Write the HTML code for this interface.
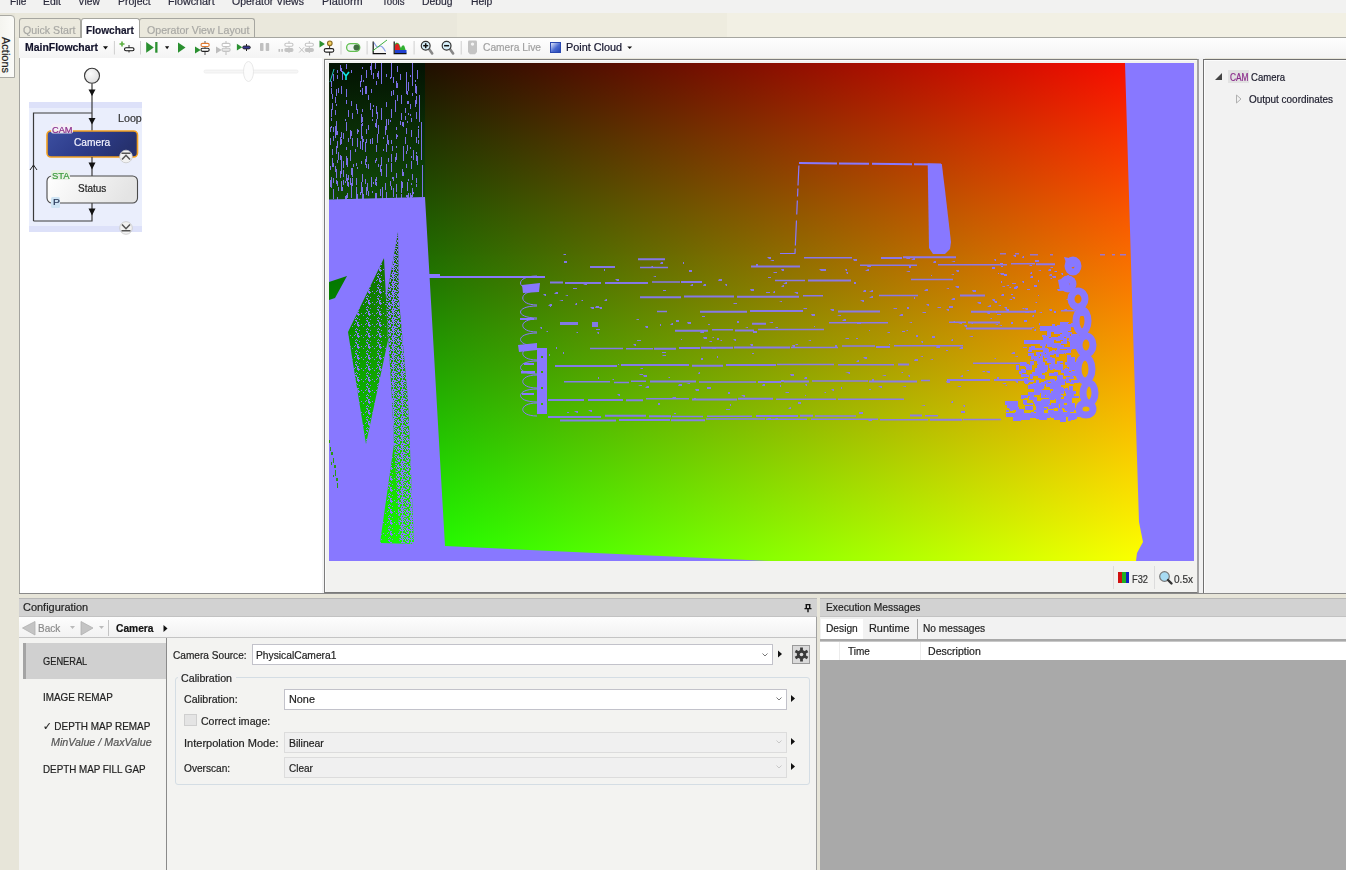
<!DOCTYPE html>
<html><head><meta charset="utf-8">
<style>
*{margin:0;padding:0;box-sizing:border-box}
html,body{width:1346px;height:870px;overflow:hidden;background:#e7e5d9;font-family:"Liberation Sans",sans-serif;font-size:10.5px;color:#1e1e1e}
.a{position:absolute;white-space:nowrap}
.t{position:absolute;white-space:nowrap;line-height:1;transform-origin:0 0;-webkit-text-stroke:0.2px currentColor}
svg{position:absolute;overflow:visible}
</style></head><body>

<!-- MENU -->
<div class="a" style="left:0;top:0;width:1346px;height:13px;background:#f2f2f1"></div>

<div class="a" style="left:15px;top:13px;width:442px;height:24px;background:#eae8dc"></div>
<div class="a" style="left:457px;top:13px;width:270px;height:24px;background:#eeecdf"></div>
<div class="a" style="left:727px;top:13px;width:619px;height:24px;background:#f2f0e4"></div>
<!-- ACTIONS side tab -->
<div class="a" style="left:-2px;top:15px;width:17px;height:63px;background:linear-gradient(to right,#f4f4ef,#fbfbf8);border:1px solid #a9a9a3;border-radius:0 4px 0 0"></div>
<div class="t" style="top:37px;transform:rotate(90deg);transform-origin:0 0;left:11px;font-size:11px;color:#222">Actions</div>

<!-- DOC TABS -->
<div class="a" style="left:19px;top:18px;width:62px;height:19px;background:#ebe9dd;border:1px solid #a6a6a0;border-bottom:none;border-radius:3px 3px 0 0"></div>

<div class="a" style="left:139px;top:18px;width:116px;height:19px;background:#ebe9dd;border:1px solid #a6a6a0;border-bottom:none;border-radius:3px 3px 0 0"></div>

<!-- TOOLBAR -->
<div class="a" style="left:19px;top:37px;width:1327px;height:21px;background:linear-gradient(#fefefe,#f4f4f4);border-top:1px solid #a6a6a0"></div>
<div class="a" style="left:81px;top:18px;width:59px;height:20px;background:#fff;border:1px solid #a6a6a0;border-bottom:none;border-radius:3px 3px 0 0"></div>
<!-- TOOLBAR ICONS -->
<svg id="tb" style="left:0;top:0" width="700" height="60">
<path d="M103,46.2 L108,46.2 L105.5,49.4 Z" fill="#111"/>
<rect x="113.9" y="41" width="1" height="13.5" fill="#cfcfcf"/>
<rect x="140.0" y="41" width="1" height="13.5" fill="#cfcfcf"/>
<rect x="340.5" y="41" width="1" height="13.5" fill="#cfcfcf"/>
<rect x="366.6" y="41" width="1" height="13.5" fill="#cfcfcf"/>
<rect x="413.6" y="41" width="1" height="13.5" fill="#cfcfcf"/>
<rect x="460.7" y="41" width="1" height="13.5" fill="#cfcfcf"/>
<path d="M122,41.5 v5 M119.5,44 h5" stroke="#5cb040" stroke-width="1.6"/>
<path d="M129,45 v7.5" stroke="#333" stroke-width="1"/>
<rect x="124.5" y="47.7" width="9.5" height="3.0" rx="1.5" fill="#fff" stroke="#111" stroke-width="1.1"/>
<path d="M146.2,42 L153.8,47.4 L146.2,52.7 Z" fill="#2a9030"/><rect x="155.2" y="42" width="2.3" height="10.7" fill="#2a9030"/>
<path d="M165,46.3 L169.2,46.3 L167.1,49.2 Z" fill="#111"/>
<path d="M178,42.5 L185.5,47.6 L178,52.7 Z" fill="#2a9030"/>
<path d="M205,41 v14" stroke="#555" stroke-width="1"/>
<rect x="201" y="43.4" width="8.199999999999989" height="3.1000000000000014" rx="1.5500000000000007" fill="#fff" stroke="#e07a30" stroke-width="1.1"/>
<rect x="201" y="48.3" width="8.199999999999989" height="3.1000000000000014" rx="1.5500000000000007" fill="#fff" stroke="#222" stroke-width="1.1"/>
<path d="M195,46.5 L200.7,50 L195,53.6 Z" fill="#2a9030"/>
<path d="M226,41 v14" stroke="#bbb" stroke-width="1"/>
<rect x="222" y="43.4" width="8.199999999999989" height="3.1000000000000014" rx="1.5500000000000007" fill="#fff" stroke="#c4c4c4" stroke-width="1.1"/>
<rect x="222" y="48.3" width="8.199999999999989" height="3.1000000000000014" rx="1.5500000000000007" fill="#e8e8e8" stroke="#c4c4c4" stroke-width="1.1"/>
<path d="M216,46.5 L221.7,50 L216,53.6 Z" fill="#bdbdbd"/>
<path d="M246.5,44 v7" stroke="#222" stroke-width="1"/>
<path d="M236.9,43.8 L242.2,47.2 L236.9,50.5 Z" fill="#2a9030"/>
<rect x="242.7" y="46" width="7.600000000000023" height="2.8999999999999986" rx="1.4499999999999993" fill="#3a3a90" stroke="#222" stroke-width="0.9"/>
<rect x="260" y="43" width="3.5" height="8" rx="0.8" fill="#c0c0c0"/><rect x="265.7" y="43" width="3.5" height="8" rx="0.8" fill="#c0c0c0"/>
<rect x="278.5" y="49" width="1.6" height="2.8" fill="#c0c0c0"/><rect x="281.3" y="49" width="1.6" height="2.8" fill="#c0c0c0"/>
<path d="M289,41 v12" stroke="#c0c0c0" stroke-width="1"/>
<rect x="284.8" y="43.3" width="8.199999999999989" height="2.9000000000000057" rx="1.4500000000000028" fill="#fff" stroke="#c4c4c4" stroke-width="1.1"/>
<rect x="284.8" y="48.6" width="8.199999999999989" height="2.8999999999999986" rx="1.4499999999999993" fill="#c4c4c4" stroke="#c4c4c4" stroke-width="1.1"/>
<path d="M299.2,47.2 l5,5.3 M304.2,47.2 l-5,5.3" stroke="#c4c4c4" stroke-width="1"/>
<path d="M309.3,41 v12" stroke="#c0c0c0" stroke-width="1"/>
<rect x="305.2" y="43.3" width="8.199999999999989" height="2.9000000000000057" rx="1.4500000000000028" fill="#fff" stroke="#c4c4c4" stroke-width="1.1"/>
<rect x="305.2" y="48.6" width="8.199999999999989" height="2.8999999999999986" rx="1.4499999999999993" fill="#c4c4c4" stroke="#c4c4c4" stroke-width="1.1"/>
<path d="M319.5,40.5 L324.9,44 L319.5,47.4 Z" fill="#2a9030"/>
<path d="M329.6,45.5 v10" stroke="#333" stroke-width="1"/>
<circle cx="329.8" cy="43.3" r="2.3" fill="#f4d060" stroke="#8a6a20" stroke-width="1.1"/>
<rect x="324.2" y="48.6" width="9.600000000000023" height="3.5" rx="1.75" fill="#fff" stroke="#222" stroke-width="1.1"/>
<rect x="346.6" y="43.6" width="13.2" height="7.8" rx="3.9" fill="#eef4f2" stroke="#62c050" stroke-width="1.3"/>
<circle cx="356.5" cy="47.5" r="3" fill="#3f6f40"/>
<path d="M373.2,41.4 V53.6 H386" stroke="#111" stroke-width="1.2" fill="none"/>
<path d="M374,42.5 C376,46 377,48 379,46.5 C381,45 383,47 385.5,51.5" stroke="#8aa0e8" stroke-width="1.1" fill="none"/>
<path d="M372.5,51 L387,40" stroke="#40b040" stroke-width="1" fill="none"/>
<path d="M395,53 V44 C396,42 399,42 400,46 L401,48 C402,45 404,44 405,48 L406.5,53 Z" fill="#30b030"/>
<path d="M395,53 V46 C396,42.5 398.5,42.5 399.5,46.5 L400.5,53 Z" fill="#e02020"/>
<path d="M395,50 H406.5 V53.3 H395 Z" fill="#2040d0"/>
<path d="M394.2,41.4 V53.6 H406.5" stroke="#111" stroke-width="1.2" fill="none"/>
<path d="M428.7,48.5 L432.2,53.5" stroke="#888" stroke-width="2.6" stroke-linecap="round"/>
<circle cx="425.7" cy="45.7" r="4.4" fill="#d8f0fa" stroke="#333" stroke-width="1.2"/>
<path d="M423.2,45.7 h5" stroke="#111" stroke-width="1.5"/>
<path d="M425.7,43.2 v5" stroke="#111" stroke-width="1.5"/>
<path d="M449.6,48.5 L453.1,53.5" stroke="#888" stroke-width="2.6" stroke-linecap="round"/>
<circle cx="446.6" cy="45.7" r="4.4" fill="#d8f0fa" stroke="#333" stroke-width="1.2"/>
<path d="M444.1,45.7 h5" stroke="#111" stroke-width="1.5"/>
<path d="M468,42 Q468,40.6 469.4,40.6 H475.6 Q477,40.6 477,42 V52 L475,54.2 H470 L468,52 Z" fill="#c4c4c4"/><circle cx="472.5" cy="44.1" r="1.7" fill="#f4f4f4"/>
<defs><linearGradient id="pcg" x1="0" y1="0" x2="1" y2="1"><stop offset="0" stop-color="#f0f4ff"/><stop offset="0.55" stop-color="#4a6ad0"/><stop offset="1" stop-color="#2040b0"/></linearGradient></defs>
<rect x="550.5" y="42.5" width="10" height="10" fill="url(#pcg)" stroke="#2a48b0" stroke-width="1"/>
<path d="M627.3,46.5 L632.1,46.5 L629.7,49 Z" fill="#111"/>
</svg>

<!-- FLOWCHART PANEL -->
<div class="a" style="left:19px;top:58px;width:304px;height:536px;background:#fff;border-left:1px solid #a4a4a0;border-bottom:1px solid #a0a0a0"></div>
<div class="a" style="left:322px;top:58px;width:2px;height:535px;background:#f4f4f4"></div>
<svg id="fc" style="left:0;top:0" width="330" height="240">
<defs>
<linearGradient id="camg" x1="0" y1="0" x2="1" y2="0.3"><stop offset="0" stop-color="#3c4fa0"/><stop offset="0.5" stop-color="#2e3d8c"/><stop offset="1" stop-color="#26316e"/></linearGradient>
<linearGradient id="stg" x1="0" y1="0" x2="1" y2="0.2"><stop offset="0" stop-color="#ffffff"/><stop offset="1" stop-color="#e4e4e4"/></linearGradient>
<radialGradient id="cg" cx="0.4" cy="0.35" r="0.7"><stop offset="0" stop-color="#fbfbfb"/><stop offset="1" stop-color="#dedede"/></radialGradient>
</defs>
<rect x="204" y="70" width="94" height="3" rx="1.5" fill="#f6f6f6" stroke="#ececec" stroke-width="0.8"/>
<ellipse cx="248.5" cy="71.5" rx="5" ry="10" fill="#fcfcfc" stroke="#e2e2e2" stroke-width="0.8"/>
<rect x="29" y="102" width="113" height="130" fill="#eaeefc"/>
<rect x="29" y="102" width="113" height="6" fill="#dde1f9"/>
<rect x="29" y="226" width="113" height="6" fill="#dde1f9"/>
<circle cx="92" cy="75.8" r="7.5" fill="url(#cg)" stroke="#3a3a3a" stroke-width="1.1"/>
<path d="M92,83.5 V131" stroke="#3a3a3a" stroke-width="1.2"/>
<path d="M88.5,89.5 L95.5,89.5 L92,96 Z" fill="#111"/>
<path d="M33.5,221 V113 H92" stroke="#3a3a3a" stroke-width="1.2" fill="none"/>
<path d="M88.5,118 L95.5,118 L92,124.5 Z" fill="#111"/>
<path d="M30,170 L33.5,165 L37,170" stroke="#222" stroke-width="1" fill="none"/>
<rect x="47" y="131" width="90.5" height="26" rx="4" fill="url(#camg)" stroke="#f2a020" stroke-width="1.6"/>
<rect x="51" y="123.5" width="22" height="10" rx="2" fill="#f4eef6" opacity="0.9"/>
<circle cx="126" cy="156.5" r="6.3" fill="#f2f2f2" stroke="#c8c8c8" stroke-width="0.8"/>
<path d="M121.5,153.3 h9 M122,159.5 L126,155.3 L130,159.5" stroke="#555" stroke-width="1.6" fill="none"/>
<path d="M92,157 V176" stroke="#3a3a3a" stroke-width="1.2"/>
<path d="M88.5,162.5 L95.5,162.5 L92,169.5 Z" fill="#111"/>
<rect x="47" y="176" width="90.5" height="27" rx="5" fill="url(#stg)" stroke="#4a4a4a" stroke-width="1.1"/>
<rect x="51" y="170" width="19" height="10" rx="2" fill="#e8f0e4" opacity="0.95"/>
<rect x="51" y="197" width="9" height="11" rx="1.5" fill="#cfe4f4"/>
<path d="M92,203 V221 H33.5" stroke="#3a3a3a" stroke-width="1.2" fill="none"/>
<path d="M88.5,208.5 L95.5,208.5 L92,215.5 Z" fill="#111"/>
<circle cx="126" cy="228" r="6.3" fill="#f2f2f2" stroke="#c8c8c8" stroke-width="0.8"/>
<path d="M122,224.5 L126,228.7 L130,224.5 M121.5,230.7 h9" stroke="#555" stroke-width="1.6" fill="none"/>
</svg>

<!-- IMAGE PANEL -->
<div class="a" style="left:1197px;top:58px;width:8px;height:536px;background:#f2f2f2"></div>
<div class="a" style="left:324px;top:59px;width:875px;height:535px;background:#f2f2f0;border:1px solid #7c7c7c;border-right:2px solid #a4a4a4;border-bottom:2px solid #7a7a7a;box-shadow:inset 1px 1px 0 #fafafa"></div>
<div id="img" class="a" style="left:329px;top:63px;width:865px;height:498px;overflow:hidden;isolation:isolate">
<div class="a" style="left:0;top:0;width:865px;height:498px;background:linear-gradient(to right,rgb(2,0,0) 0px,rgb(255,0,0) 823px)"></div>
<div class="a" style="left:0;top:0;width:865px;height:498px;background:linear-gradient(to bottom,rgb(0,14,0) 0px,rgb(0,255,0) 495px);mix-blend-mode:screen"></div>
<svg width="865" height="498" viewBox="329 63 865 498" style="left:0;top:0">
<defs>
<linearGradient id="dg" x1="0" y1="0" x2="0" y2="1"><stop offset="0" stop-color="#031203"/><stop offset="0.5" stop-color="#0a2e06"/><stop offset="1" stop-color="#104a08"/></linearGradient>
</defs>
<rect x="329" y="63" width="96" height="136" fill="url(#dg)"/>
<path fill="#8878ff" fill-opacity="0.9" d="M343,164h1v3h-1zM411,156h1v2h-1zM415,80h1v2h-1zM366,164h1v4h-1zM416,137h1v6h-1zM362,109h1v3h-1zM402,182h1v6h-1zM378,125h1v9h-1zM396,81h1v7h-1zM343,170h1v7h-1zM401,190h1v3h-1zM341,132h1v6h-1zM392,177h1v2h-1zM345,181h1v2h-1zM406,164h1v4h-1zM371,177h1v8h-1zM351,101h1v5h-1zM331,109h1v8h-1zM381,157h1v2h-1zM391,163h1v9h-1zM341,165h1v9h-1zM336,104h1v2h-1zM341,156h1v8h-1zM406,151h1v3h-1zM376,182h1v4h-1zM358,130h1v2h-1zM416,155h1v6h-1zM357,129h1v5h-1zM368,191h1v5h-1zM407,121h1v2h-1zM385,183h1v7h-1zM346,156h1v9h-1zM408,113h1v2h-1zM381,108h1v8h-1zM341,181h1v4h-1zM401,95h1v9h-1zM416,152h1v2h-1zM362,117h1v5h-1zM396,146h1v2h-1zM411,195h1v4h-1zM401,197h1v2h-1zM408,101h1v3h-1zM406,195h1v2h-1zM336,126h1v9h-1zM362,192h1v9h-1zM408,193h1v5h-1zM341,163h1v8h-1zM376,81h1v4h-1zM350,156h1v5h-1zM366,187h1v8h-1zM396,194h1v7h-1zM386,144h1v7h-1zM330,180h1v7h-1zM411,195h1v3h-1zM371,89h1v4h-1zM418,129h1v9h-1zM336,146h1v8h-1zM331,81h1v6h-1zM345,119h1v2h-1zM356,104h1v6h-1zM362,141h1v9h-1zM372,191h1v2h-1zM333,127h1v5h-1zM401,194h1v8h-1zM393,189h1v6h-1zM350,150h1v7h-1zM370,66h1v4h-1zM393,77h1v6h-1zM332,103h1v7h-1zM376,145h1v7h-1zM391,109h1v9h-1zM361,134h1v2h-1zM341,86h1v8h-1zM366,139h1v4h-1zM351,189h1v8h-1zM413,192h1v2h-1zM336,121h1v7h-1zM333,178h1v5h-1zM401,188h1v3h-1zM407,197h1v3h-1zM361,130h1v9h-1zM352,113h1v6h-1zM335,97h1v6h-1zM412,188h1v9h-1zM348,182h1v5h-1zM401,184h1v9h-1zM361,131h1v3h-1zM347,193h1v5h-1zM356,187h1v9h-1zM350,178h1v7h-1zM381,159h1v7h-1zM340,137h1v8h-1zM337,75h1v4h-1zM362,174h1v8h-1zM352,168h1v9h-1zM397,95h1v6h-1zM370,139h1v5h-1zM391,140h1v4h-1zM410,104h1v5h-1zM416,178h1v5h-1zM416,86h1v7h-1zM361,124h1v8h-1zM411,161h1v8h-1zM335,132h1v6h-1zM413,155h1v5h-1zM365,86h1v8h-1zM376,177h1v4h-1zM393,188h1v9h-1zM346,177h1v4h-1zM336,180h1v4h-1zM396,127h1v3h-1zM360,81h1v6h-1zM375,63h1v6h-1zM368,125h1v5h-1zM360,141h1v8h-1zM397,83h1v5h-1zM380,189h1v7h-1zM378,164h1v3h-1zM361,114h1v9h-1zM376,119h1v9h-1zM338,187h1v4h-1zM333,163h1v4h-1zM336,169h1v8h-1zM410,147h1v2h-1zM346,147h1v3h-1zM396,134h1v5h-1zM375,160h1v3h-1zM401,113h1v7h-1zM396,184h1v8h-1zM337,181h1v5h-1zM383,149h1v2h-1zM341,139h1v5h-1zM376,109h1v5h-1zM343,180h1v5h-1zM335,126h1v7h-1zM405,116h1v4h-1zM403,122h1v5h-1zM372,138h1v6h-1zM366,129h1v5h-1zM362,123h1v3h-1zM368,164h1v5h-1zM406,72h1v9h-1zM376,158h1v3h-1zM361,75h1v7h-1zM331,177h1v7h-1zM381,118h1v2h-1zM386,146h1v6h-1zM408,82h1v9h-1zM353,164h1v3h-1zM370,104h1v6h-1zM337,141h1v7h-1zM386,169h1v8h-1zM330,166h1v4h-1zM340,171h1v7h-1zM416,96h1v8h-1zM376,106h1v4h-1zM406,80h1v6h-1zM391,186h1v4h-1zM386,195h1v4h-1zM416,112h1v7h-1zM375,179h1v6h-1zM385,126h1v9h-1zM405,108h1v5h-1zM341,184h1v7h-1zM403,173h1v2h-1zM410,193h1v4h-1zM407,91h1v4h-1zM388,119h1v6h-1zM370,103h1v4h-1zM406,128h1v6h-1zM386,192h1v5h-1zM372,109h1v8h-1zM411,130h1v7h-1zM347,178h1v8h-1zM388,158h1v4h-1zM340,155h1v5h-1zM412,75h1v6h-1zM378,71h1v8h-1zM336,169h1v9h-1zM333,74h1v7h-1zM388,140h1v5h-1zM351,168h1v7h-1zM331,184h1v4h-1zM352,178h1v8h-1zM403,152h1v9h-1zM331,126h1v2h-1zM346,123h1v5h-1zM410,195h1v4h-1zM376,193h1v9h-1zM401,182h1v5h-1zM336,89h1v7h-1zM412,174h1v6h-1zM411,118h1v4h-1zM392,146h1v5h-1zM411,183h1v2h-1zM343,163h1v4h-1zM346,100h1v4h-1zM351,70h1v3h-1zM386,74h1v3h-1zM361,161h1v3h-1zM342,71h1v9h-1zM362,88h1v7h-1zM332,149h1v6h-1zM387,135h1v9h-1zM338,88h1v5h-1zM333,136h1v5h-1zM406,76h1v9h-1zM357,194h1v5h-1zM346,122h1v9h-1zM391,154h1v8h-1zM418,140h1v4h-1zM403,146h1v7h-1zM368,95h1v5h-1zM351,131h1v5h-1zM386,146h1v5h-1zM346,89h1v8h-1zM346,174h1v6h-1zM390,181h1v5h-1zM352,138h1v8h-1zM396,173h1v5h-1zM371,179h1v8h-1zM395,103h1v9h-1zM357,167h1v2h-1zM416,90h1v4h-1zM408,179h1v2h-1zM395,157h1v5h-1zM348,110h1v7h-1zM390,77h1v2h-1zM397,66h1v6h-1zM393,90h1v5h-1zM356,163h1v3h-1zM395,100h1v6h-1zM367,183h1v8h-1zM377,134h1v9h-1zM342,187h1v4h-1zM381,77h1v7h-1zM348,138h1v4h-1zM402,122h1v4h-1zM363,139h1v3h-1zM348,175h1v3h-1zM350,130h1v9h-1zM418,126h1v2h-1zM407,182h1v9h-1zM341,158h1v7h-1zM337,70h1v3h-1zM351,193h1v5h-1zM381,169h1v7h-1zM413,150h1v5h-1zM397,135h1v2h-1zM405,137h1v7h-1zM360,192h1v3h-1zM376,147h1v3h-1zM335,166h1v6h-1zM360,90h1v2h-1zM341,159h1v2h-1zM356,180h1v4h-1zM381,110h1v8h-1zM345,196h1v8h-1zM393,177h1v4h-1zM416,184h1v3h-1zM351,183h1v8h-1zM346,64h1v5h-1zM332,94h1v5h-1zM356,178h1v7h-1zM415,84h1v9h-1zM340,65h1v6h-1zM382,187h1v9h-1zM351,183h1v7h-1zM402,169h1v7h-1zM383,137h1v2h-1zM365,142h1v8h-1zM365,159h1v6h-1zM337,131h1v4h-1zM415,100h1v7h-1zM361,187h1v6h-1zM373,182h1v2h-1zM343,161h1v7h-1zM412,79h1v7h-1zM361,185h1v5h-1zM377,112h1v7h-1zM407,101h1v3h-1zM341,158h1v7h-1zM346,195h1v5h-1zM362,187h1v6h-1zM403,172h1v4h-1zM355,149h1v3h-1zM417,70h1v9h-1zM366,86h1v8h-1zM357,109h1v5h-1zM372,119h1v2h-1zM410,75h1v2h-1zM331,88h1v6h-1zM347,158h1v9h-1zM366,160h1v2h-1zM361,182h1v4h-1zM386,119h1v9h-1zM365,149h1v3h-1zM366,156h1v4h-1zM350,178h1v4h-1zM366,131h1v2h-1zM357,138h1v9h-1zM406,90h1v4h-1zM363,194h1v9h-1zM362,136h1v8h-1zM375,123h1v4h-1zM330,138h1v7h-1zM333,193h1v6h-1zM335,110h1v5h-1zM356,196h1v3h-1zM356,189h1v4h-1zM410,114h1v2h-1zM382,195h1v9h-1zM406,86h1v6h-1zM386,126h1v4h-1zM332,158h1v9h-1zM386,195h1v7h-1zM337,160h1v3h-1zM333,189h1v4h-1zM341,68h1v4h-1zM373,105h1v2h-1zM362,67h1v2h-1zM401,181h1v7h-1zM400,74h1v6h-1zM391,91h1v5h-1zM400,121h1v4h-1zM337,197h1v7h-1zM380,165h1v7h-1zM396,153h1v7h-1zM363,80h1v2h-1zM390,120h1v2h-1zM373,73h1v6h-1zM330,127h1v5h-1zM377,73h1v4h-1zM412,93h1v3h-1zM350,182h1v3h-1zM375,193h1v6h-1zM343,133h1v6h-1zM365,179h1v5h-1zM417,156h1v9h-1zM366,70h1v8h-1zM386,164h1v5h-1zM407,145h1v6h-1zM331,118h1v3h-1zM338,152h1v8h-1zM348,175h1v5h-1zM386,102h1v5h-1zM407,195h1v4h-1zM371,63h1v12h-1zM381,63h1v14h-1zM391,63h1v15h-1zM412,63h1v17h-1zM419,95h1v27h-1zM421,122h1v38h-1zM422,165h1v32h-1z"/>
<path d="M343,72 L346,76 L349,72 M346,76 V80" stroke="#10e8e8" stroke-width="1.6" fill="none"/>
<path d="M330,82 L334,69" stroke="#20c0c0" stroke-width="1" fill="none"/>
<path fill-rule="evenodd" fill="#8878ff" d="M329,199.5 L425,197 L445,546 L770,561 L329,561 Z M384,258 L388,340 L366,444 L348,332 Z M398,232 L386,300 L392,400 L394,444 L380,543 L414,544 L408,400 L399,300 Z M329,282 L347,276 L335,298 L329,300 Z"/>
<pattern id="ptile" width="9" height="9" patternUnits="userSpaceOnUse"><path fill="#8878ff" d="M0,0h1v1h-1zM3,0h1v1h-1zM6,0h1v1h-1zM1,1h1v1h-1zM2,1h1v1h-1zM3,1h1v1h-1zM6,1h1v1h-1zM2,2h1v1h-1zM3,2h1v1h-1zM5,2h1v1h-1zM6,2h1v1h-1zM7,2h1v1h-1zM8,2h1v1h-1zM0,3h1v1h-1zM1,3h1v1h-1zM5,3h1v1h-1zM7,3h1v1h-1zM8,3h1v1h-1zM4,4h1v1h-1zM5,4h1v1h-1zM6,4h1v1h-1zM7,4h1v1h-1zM0,5h1v1h-1zM2,5h1v1h-1zM5,5h1v1h-1zM6,5h1v1h-1zM8,5h1v1h-1zM1,6h1v1h-1zM2,6h1v1h-1zM5,6h1v1h-1zM6,6h1v1h-1zM7,6h1v1h-1zM1,7h1v1h-1zM2,7h1v1h-1zM3,7h1v1h-1zM4,7h1v1h-1zM6,7h1v1h-1zM8,7h1v1h-1zM0,8h1v1h-1zM2,8h1v1h-1zM4,8h1v1h-1zM5,8h1v1h-1zM6,8h1v1h-1zM7,8h1v1h-1z"/></pattern>
<path fill="url(#ptile)" d="M398,232 L386,300 L392,400 L394,444 L400,543 L414,544 L408,400 L399,300 Z"/>
<pattern id="ptile2" width="11" height="11" patternUnits="userSpaceOnUse"><path fill="#8878ff" d="M7,0h1v1h-1zM3,1h1v1h-1zM4,1h1v1h-1zM4,2h1v1h-1zM5,3h1v1h-1zM6,3h1v1h-1zM3,4h1v1h-1zM5,4h1v1h-1zM2,5h1v1h-1zM5,5h1v1h-1zM6,5h1v1h-1zM9,5h1v1h-1zM5,6h1v1h-1zM6,6h1v1h-1zM7,6h1v1h-1zM0,7h1v1h-1zM6,7h1v1h-1zM4,9h1v1h-1zM3,10h1v1h-1zM5,10h1v1h-1z"/></pattern>
<path fill="url(#ptile2)" d="M384,258 L388,340 L366,444 L348,332 Z M394,444 L400,543 L380,543 Z"/>
<path fill="#2a9a10" d="M329,440h1v3h-1z M330,447h1v4h-1z M331,452h2v3h-2z M333,458h1v5h-1z M334,465h2v3h-2z M335,470h1v6h-1z M336,478h2v3h-2z M337,483h1v5h-1z M331,462h1v3h-1z M333,475h1v2h-1z"/>
<path fill="#8878ff" d="M1125,63 L1194,63 L1194,561 L1136,561 L1137,553 L1143,542 L1139,522 L1133,330 Z"/>
<path fill="none" stroke="#8878ff" stroke-width="1.2" stroke-dasharray="20 3 25 6 14 4 8 3" d="M780,253.5 L795,253.5 L799,163.5"/>
<path fill="none" stroke="#8878ff" stroke-width="2" stroke-dasharray="38 2 30 3 40 2 30 1" d="M799,163 L941,164.5"/>
<path fill="#8878ff" d="M927.7,163.5 L941.8,164 L945,190 L951,242 L950,249 L945,254 L933,254 L929,248 Z"/>
<path fill="#8878ff" fill-opacity="0.9" d="M638,258.3h27v2h-27zM804,257.1h48v1.5h-48zM881,257.0h21v2h-21zM903,256.3h53v2h-53zM640,266.8h28v1.5h-28zM751,265.5h49v2h-49zM860,264.6h57v1.5h-57zM938,264.0h69v1.5h-69zM1011,263.0h24v1.5h-24zM1036,263.3h19v2h-19zM550,281.5h13v2h-13zM565,281.9h36v2h-36zM605,282.1h43v2h-43zM652,281.2h28v1.5h-28zM681,281.0h21v2h-21zM775,279.8h30v1.5h-30zM808,279.5h43v2h-43zM911,278.7h42v1.5h-42zM1069,278.5h6v2h-6zM640,296.2h41v2h-41zM684,295.5h50v2h-50zM737,295.8h62v2h-62zM803,295.0h20v1.5h-20zM879,294.7h39v1.5h-39zM960,294.4h25v2h-25zM657,310.8h10v1.5h-10zM700,310.7h47v2h-47zM750,310.1h53v2h-53zM838,310.5h42v2h-42zM971,310.7h65v2h-65zM1061,310.0h14v1.5h-14zM752,322.7h14v2h-14zM829,321.9h59v1.5h-59zM949,321.5h17v1.5h-17zM968,321.4h32v2h-32zM675,329.8h33v2h-33zM712,329.1h21v1.5h-21zM735,329.4h19v2h-19zM758,328.8h66v1.5h-66zM966,327.6h66v2h-66zM590,347.7h33v1.5h-33zM626,347.9h27v1.5h-27zM654,347.7h22v2h-22zM679,347.0h21v2h-21zM701,346.8h32v2h-32zM734,346.6h56v2h-56zM791,346.7h47v1.5h-47zM842,345.3h33v1.5h-33zM876,346.0h14v2h-14zM894,344.9h69v1.5h-69zM555,365.0h62v2h-62zM621,364.1h68v2h-68zM692,364.7h31v2h-31zM726,364.0h50v2h-50zM777,363.7h57v1.5h-57zM838,363.9h56v1.5h-56zM898,363.5h11v2h-11zM973,362.6h54v1.5h-54zM564,380.9h46v1.5h-46zM614,381.7h15v1.5h-15zM631,380.6h15v1.5h-15zM650,380.5h46v2h-46zM699,381.3h57v1.5h-57zM758,381.0h23v2h-23zM784,380.4h25v2h-25zM812,380.3h56v1.5h-56zM869,380.5h48v2h-48zM921,379.7h9v1.5h-9zM947,379.1h43v2h-43zM994,378.9h30v2h-30zM548,399.0h36v2h-36zM588,398.9h35v2h-35zM626,399.2h17v2h-17zM646,398.1h43v1.5h-43zM692,398.5h45v2h-45zM738,397.8h35v2h-35zM776,398.6h60v1.5h-60zM838,398.4h66v1.5h-66zM548,416.0h53v2h-53zM605,414.8h41v2h-41zM649,415.2h22v2h-22zM672,415.7h31v1.5h-31zM707,415.6h45v1.5h-45zM756,414.9h42v2h-42zM800,414.8h13v2h-13zM815,415.2h41v1.5h-41zM910,414.5h12v2h-12zM925,414.9h13v1.5h-13zM560,419.5h56v2h-56zM619,418.9h51v2h-51zM671,419.3h34v2h-34zM706,418.2h59v1.5h-59zM766,418.6h41v1.5h-41zM811,418.5h67v1.5h-67zM880,418.9h48v1.5h-48zM930,418.8h32v2h-32zM963,418.7h38v1.5h-38zM590,266h25v2h-25z M560,322h18v3h-18z M592,322h6v5h-6zM577,332h1v1h-2zM907,307h2v2h-2zM992,299h3v2h-2zM859,412h4v2h-4zM952,339h1v2h-2zM949,264h2v1h-4zM1068,322h1v1h-1zM1023,347h4v1h-4zM701,358h2v2h-2zM805,384h2v2h-1zM694,398h2v1h-2zM692,284h1v2h-3zM639,374h4v1h-3zM559,300h4v1h-1zM990,305h1v2h-4zM701,331h3v2h-4zM617,394h3v2h-1zM908,271h2v1h-4zM1012,283h4v1h-4zM1026,312h3v1h-4zM550,304h2v2h-4zM845,338h4v1h-3zM733,303h4v1h-3zM857,322h4v2h-4zM931,275h1v1h-1zM674,413h2v1h-2zM951,261h4v1h-1zM772,260h2v1h-4zM956,270h3v2h-2zM750,289h4v2h-3zM962,411h1v2h-3zM790,407h1v2h-3zM733,339h3v2h-1zM926,304h3v2h-1zM702,316h3v1h-3zM1052,383h2v1h-2zM567,412h2v1h-2zM790,374h4v2h-3zM633,344h3v2h-1zM1003,286h2v1h-3zM712,337h2v1h-1zM835,345h2v2h-2zM730,404h1v2h-1zM953,298h2v2h-4zM556,292h2v2h-4zM573,288h4v1h-4zM717,338h2v2h-2zM880,265h1v1h-4zM1049,405h1v2h-3zM961,411h4v2h-4zM1014,356h4v1h-1zM878,386h4v2h-1zM868,265h3v2h-4zM869,330h1v1h-1zM997,314h4v1h-4zM647,386h2v2h-4zM781,269h3v2h-2zM767,418h4v1h-1zM640,385h2v1h-4zM540,327h2v2h-1zM872,296h1v2h-4zM946,288h3v1h-1zM853,259h4v2h-3zM872,379h2v2h-2zM747,327h1v1h-3zM902,372h1v1h-2zM781,301h1v1h-3zM860,322h4v1h-3zM995,358h1v1h-2zM854,282h2v2h-2zM781,380h3v2h-3zM658,403h2v2h-2zM771,322h2v1h-4zM618,364h1v1h-1zM831,389h3v2h-1zM708,324h2v1h-2zM825,392h1v1h-2zM574,411h4v2h-1zM1051,267h2v1h-3zM868,420h4v1h-3zM1057,414h2v1h-1zM986,312h4v2h-2zM805,377h2v2h-3zM576,303h1v2h-2zM872,290h1v2h-4zM1055,365h3v1h-1zM657,297h2v1h-1zM858,360h1v2h-3zM1050,274h2v2h-3zM794,292h4v2h-1zM863,357h4v2h-2zM583,284h4v1h-2zM1006,385h1v1h-2zM959,386h2v1h-4zM845,372h4v1h-1zM775,327h3v1h-2zM968,370h1v1h-3zM856,338h2v1h-2zM952,401h1v2h-2zM1013,352h2v2h-4zM590,307h4v2h-2zM728,392h2v2h-2zM949,306h4v2h-4zM997,377h2v2h-2zM932,359h1v1h-3zM911,322h1v1h-3zM1064,352h2v2h-1zM909,266h2v2h-2zM786,282h1v2h-4zM1000,273h4v2h-3zM596,329h4v1h-4zM581,300h2v1h-1zM753,331h4v2h-4zM679,384h3v2h-4zM926,289h2v2h-4zM955,286h4v2h-2zM645,326h3v2h-2zM683,262h1v2h-1zM845,269h2v2h-1zM923,312h3v1h-4zM662,352h4v1h-4zM932,336h3v2h-3zM766,292h4v1h-4zM710,341h2v1h-3zM972,290h4v2h-3zM563,352h1v2h-1zM954,321h1v2h-4zM847,372h3v2h-1zM564,261h3v2h-3zM844,319h2v2h-4zM889,344h1v1h-1zM588,410h4v2h-1zM822,269h4v2h-4zM934,261h2v2h-3zM1046,344h4v1h-2zM737,321h2v2h-2zM780,385h1v2h-1zM785,392h4v1h-3zM810,340h1v1h-3zM752,353h2v1h-2zM703,337h4v2h-3zM964,325h3v2h-2zM795,344h3v1h-2zM604,269h1v2h-1zM1002,383h4v1h-2zM962,375h1v2h-3zM946,381h4v2h-3zM916,335h2v2h-2zM672,397h4v1h-3zM704,284h2v2h-3zM776,418h2v1h-4zM676,320h3v2h-3zM946,350h2v1h-2zM661,262h2v2h-3zM663,355h3v1h-4zM715,347h1v2h-4zM830,309h4v2h-2zM938,307h3v1h-4zM719,279h3v2h-4zM663,290h3v1h-3zM687,322h4v2h-3zM773,272h4v1h-3zM805,395h1v1h-1zM547,331h1v1h-2zM884,375h2v1h-4zM1035,260h4v2h-4zM599,307h3v2h-2zM837,315h4v1h-2zM567,295h1v1h-3zM907,258h3v1h-4zM550,305h1v2h-1zM811,314h4v2h-3zM643,375h4v2h-3zM564,254h2v1h-3zM937,346h3v2h-4zM902,331h3v1h-3zM636,319h3v1h-2zM756,264h2v2h-2zM721,340h1v1h-2zM921,341h2v2h-1zM549,354h1v2h-1zM869,389h2v1h-2zM868,269h1v2h-4zM1024,308h4v2h-2zM819,269h4v2h-2zM905,386h1v1h-4zM596,306h3v2h-4zM1056,397h1v1h-4zM986,371h4v2h-2zM924,405h1v1h-4zM997,324h1v1h-3zM695,389h4v2h-3zM860,300h4v2h-1zM669,377h1v1h-2zM685,281h1v2h-3zM606,299h1v2h-3zM1070,341h4v1h-1zM977,302h4v2h-2zM615,279h4v2h-2zM613,379h1v1h-2zM914,297h1v2h-1zM894,308h3v1h-4zM726,409h4v1h-4zM1040,270h1v1h-3zM741,395h4v2h-1zM887,332h3v1h-2zM725,284h2v2h-1zM672,323h1v2h-3zM906,330h2v1h-1zM750,344h3v2h-2zM689,270h3v2h-3zM958,323h4v1h-1zM637,340h4v1h-4zM660,324h1v2h-1zM1005,309h4v2h-2zM963,405h2v2h-1zM915,359h3v2h-4zM814,326h1v1h-1zM961,347h2v2h-4zM970,323h3v1h-1zM641,368h2v1h-3zM556,347h1v2h-1zM699,372h1v2h-2zM1015,381h3v2h-1zM767,257h4v2h-2zM652,266h1v2h-4zM763,384h2v2h-3zM686,383h4v1h-1zM543,294h3v2h-1zM983,371h2v1h-3zM914,258h1v2h-4zM653,276h3v1h-1zM783,285h1v2h-3zM901,314h2v2h-4zM595,307h4v1h-1zM1010,287h1v1h-2zM717,356h1v2h-1zM774,291h1v2h-2zM841,387h1v2h-1zM1045,328h1v2h-4zM846,272h2v2h-1zM969,336h4v1h-2zM1052,276h4v2h-3zM804,308h3v1h-4zM1028,350h3v2h-3zM1001,281h1v2h-1zM707,387h4v2h-4zM768,277h3v1h-3zM908,375h2v2h-1zM922,356h1v1h-3zM792,345h3v2h-2zM597,332h2v2h-1zM1068,340h1v1h-2zM798,402h3v2h-3zM951,274h3v1h-1zM946,309h3v2h-1zM864,290h2v2h-3zM598,377h1v2h-1zM681,339h1v1h-1zM1030,359h3v1h-2z"/>
<rect x="425" y="274" width="15" height="4" fill="#8878ff"/><rect x="440" y="276" width="105" height="2" fill="#8878ff"/>
<path fill-rule="evenodd" fill="#8878ff" d="M537,348 h10 v66 h-10 z M541,356 h2v2h-2z M541,371 h2v2h-2z M541,387 h2v2h-2z M541,403 h2v2h-2z"/>
<path fill="none" stroke="#8878ff" stroke-width="1" d="M537,276 C515,276 515,290 537,290 M537,291 C518,291 518,305 537,305 M537,306 C515,306 515,318 537,318 M537,319 C518,319 518,332 537,332 M537,333 C515,333 515,346 537,346 M537,347 C518,347 518,360 537,360 M537,361 C515,361 515,374 537,374 M537,375 C518,375 518,388 537,388 M537,389 C515,389 515,402 537,402 M537,403 C518,403 518,416 537,416"/>
<path fill="#8878ff" d="M522,285 L540,283 L539,292 L523,293 Z M518,345 L537,343 L537,350 L519,352 Z M520,318h14v2h-14z M521,371h14v2.5h-14z M522,393h12v2h-12z M524,363h10v2h-10z"/>
<ellipse cx="1073" cy="266" rx="5" ry="6" fill="none" stroke="#8878ff" stroke-width="7"/>
<ellipse cx="1068" cy="284" rx="5" ry="5" fill="none" stroke="#8878ff" stroke-width="7"/>
<ellipse cx="1078" cy="299" rx="7" ry="8" fill="none" stroke="#8878ff" stroke-width="7"/>
<ellipse cx="1082" cy="321" rx="6" ry="11" fill="none" stroke="#8878ff" stroke-width="7"/>
<ellipse cx="1086" cy="345" rx="7" ry="9" fill="none" stroke="#8878ff" stroke-width="7"/>
<ellipse cx="1085" cy="369" rx="7" ry="12" fill="none" stroke="#8878ff" stroke-width="7"/>
<ellipse cx="1089" cy="393" rx="6" ry="10" fill="none" stroke="#8878ff" stroke-width="7"/>
<ellipse cx="1086" cy="409" rx="7" ry="6" fill="none" stroke="#8878ff" stroke-width="7"/>
<path fill="#8878ff" d="M1064,257 L1074,259 L1078,266 L1068,268 Z M1058,280 L1068,277 L1070,290 L1060,291 Z M1076,306 h8 v10 h-8z M1080,330 h8 v6 h-8z M1082,352 h8 v6 h-8z M1083,378 h8 v5 h-8z"/>
<path fill="#8878ff" d="M1032,372h4v4h-4zM1050,351h8v3h-8zM1048,338h6v3h-6zM1067,365h4v2h-4zM1037,352h3v5h-3zM1013,416h8v5h-8zM1041,400h8v3h-8zM1068,364h8v3h-8zM1041,401h4v4h-4zM1060,417h6v5h-6zM1067,357h8v5h-8zM1042,345h3v5h-3zM1064,369h8v2h-8zM1021,395h3v4h-3zM1052,379h3v3h-3zM1051,411h6v2h-6zM1007,404h8v4h-8zM1055,366h8v4h-8zM1050,364h6v5h-6zM1053,386h4v3h-4zM1039,373h3v5h-3zM1043,408h4v2h-4zM1052,350h3v2h-3zM1036,412h6v4h-6zM1057,361h3v3h-3zM1037,365h3v3h-3zM1060,334h3v5h-3zM1056,339h4v2h-4zM1058,392h6v2h-6zM1057,364h6v4h-6zM1058,388h6v5h-6zM1048,411h6v3h-6zM1045,359h4v2h-4zM1057,328h3v3h-3zM1014,405h4v4h-4zM1030,384h3v4h-3zM1066,377h8v2h-8zM1033,397h4v5h-4zM1061,341h6v3h-6zM1067,327h4v4h-4zM1038,411h6v2h-6zM1050,393h4v5h-4zM1018,409h6v5h-6zM1050,367h3v3h-3zM1070,345h6v3h-6zM1064,396h6v5h-6zM1040,343h6v3h-6zM1042,390h8v5h-8zM1025,406h8v4h-8zM1066,381h4v2h-4zM1054,372h4v3h-4zM1030,394h4v5h-4zM1060,389h6v2h-6zM1056,343h3v5h-3zM1027,415h8v3h-8zM1057,391h3v2h-3zM1070,391h6v3h-6zM1066,332h6v2h-6zM1051,363h4v2h-4zM1049,373h8v3h-8zM1034,348h8v2h-8zM1008,401h8v4h-8zM1028,380h6v2h-6zM1034,388h8v5h-8zM1067,397h3v3h-3zM1025,403h8v2h-8zM1049,395h6v5h-6zM1037,352h8v2h-8zM1034,392h6v3h-6zM1052,394h6v5h-6zM1064,374h4v2h-4zM1045,396h6v2h-6zM1043,404h6v3h-6zM1058,336h6v4h-6zM1056,380h8v2h-8zM1028,385h6v4h-6zM1038,373h3v5h-3zM1056,395h6v2h-6zM1069,337h4v5h-4zM1068,350h3v2h-3zM1036,415h6v4h-6zM1046,352h3v2h-3zM1046,415h4v3h-4zM1058,331h4v2h-4zM1041,362h4v5h-4zM1032,413h3v2h-3zM1065,388h3v5h-3zM1044,356h6v2h-6zM1052,346h4v2h-4zM1051,414h8v4h-8zM1011,407h8v3h-8zM1036,371h6v5h-6zM1030,361h4v4h-4zM1043,382h4v2h-4zM1037,359h6v5h-6zM1022,415h8v5h-8zM1015,412h8v2h-8zM1033,398h3v4h-3zM1060,410h3v4h-3zM1019,371h3v3h-3zM1061,379h8v2h-8zM1038,364h4v3h-4zM1056,350h8v4h-8zM1033,383h8v4h-8zM1067,355h4v3h-4zM1043,338h8v3h-8zM1048,338h4v2h-4zM1064,398h8v5h-8zM1071,323h3v4h-3zM1031,356h8v3h-8zM1016,365h3v5h-3zM1066,396h4v4h-4zM1071,396h8v2h-8zM1067,362h6v3h-6zM1071,344h4v4h-4zM1050,379h3v2h-3zM1046,352h8v2h-8zM1057,396h3v3h-3zM1053,383h8v4h-8zM1034,357h3v4h-3zM1071,371h4v4h-4zM1040,348h8v2h-8zM1067,406h3v5h-3zM1007,402h4v4h-4zM1068,328h3v3h-3zM1062,331h6v5h-6zM1036,406h8v5h-8zM1068,408h8v2h-8zM1047,329h8v3h-8zM1068,417h3v4h-3zM1069,365h6v5h-6zM1071,340h6v2h-6zM1018,414h3v2h-3zM1051,381h8v2h-8zM1024,378h4v5h-4zM1063,338h4v3h-4zM1049,364h3v4h-3zM1069,386h4v5h-4zM1015,401h3v4h-3zM1065,368h3v2h-3zM1048,410h6v3h-6zM1037,355h3v2h-3zM1038,375h3v3h-3zM1036,358h4v2h-4zM1057,399h8v4h-8zM1069,415h6v5h-6zM1031,393h4v2h-4zM1009,405h6v2h-6zM1062,399h4v4h-4zM1062,412h8v4h-8zM1056,384h4v5h-4zM1042,335h4v2h-4zM1020,362h6v4h-6zM1008,413h3v2h-3zM1016,413h3v2h-3zM1041,393h4v5h-4zM1015,414h3v3h-3zM1070,341h8v4h-8zM1043,340h8v2h-8zM1008,415h6v2h-6zM1070,347h6v2h-6zM1039,417h8v3h-8zM1036,390h4v3h-4zM1065,362h6v3h-6zM1012,401h3v4h-3zM1035,413h3v2h-3zM1041,382h4v4h-4zM1070,374h3v3h-3zM1070,407h4v5h-4zM1059,380h6v5h-6zM1046,383h8v4h-8zM1044,381h4v2h-4zM1060,361h3v2h-3zM1066,333h4v5h-4zM1031,413h3v2h-3zM1045,365h3v5h-3zM1056,352h3v5h-3zM1052,393h6v5h-6zM1048,357h4v4h-4zM1026,365h6v5h-6zM1036,380h3v5h-3zM1031,346h4v4h-4zM1034,410h8v2h-8zM1066,373h4v3h-4zM1051,394h6v4h-6zM1053,389h6v4h-6zM1022,370h4v3h-4zM1054,414h4v4h-4zM1060,403h4v5h-4zM1037,408h8v2h-8zM1035,403h8v3h-8zM1046,380h6v2h-6zM1064,333h3v4h-3zM1050,364h8v4h-8zM1064,372h8v3h-8zM1070,409h3v3h-3zM1067,408h4v4h-4zM1061,370h8v3h-8zM1057,343h4v5h-4zM1066,324h6v3h-6zM1050,326h3v2h-3zM1051,383h6v2h-6zM1055,411h4v2h-4zM1051,403h8v5h-8zM1026,381h3v2h-3zM1043,349h6v3h-6zM1070,405h4v3h-4zM1067,390h6v4h-6zM1018,409h3v5h-3zM1071,338h4v5h-4zM1051,329h8v2h-8zM1042,370h3v3h-3zM1042,375h3v4h-3zM1024,403h6v2h-6zM1047,332h4v5h-4zM1039,386h3v2h-3zM1070,382h4v2h-4zM1042,399h8v5h-8zM1025,380h3v4h-3zM1057,375h6v5h-6zM1013,417h8v4h-8zM1009,406h8v3h-8zM1005,401h3v4h-3zM1041,367h3v4h-3zM1028,353h6v3h-6zM1021,375h8v2h-8zM1062,327h3v3h-3zM1047,352h3v4h-3zM1041,377h4v2h-4zM1010,406h3v5h-3zM1071,334h8v4h-8zM1036,371h3v5h-3zM1060,322h8v4h-8zM1052,394h8v5h-8zM1059,347h8v2h-8zM1069,415h8v4h-8zM1041,354h8v2h-8zM1006,410h3v2h-3zM1047,343h8v4h-8zM1064,406h3v2h-3zM1051,391h8v2h-8zM1066,392h8v5h-8zM1071,380h8v3h-8zM1050,353h4v2h-4zM1025,364h4v3h-4zM1057,325h3v5h-3zM1071,372h6v4h-6zM1040,356h3v4h-3zM1030,374h3v5h-3zM1070,336h8v5h-8zM1057,393h4v3h-4zM1060,387h3v5h-3zM1054,416h6v4h-6zM1046,394h8v3h-8zM1064,405h4v4h-4zM1028,392h6v4h-6zM1055,343h4v4h-4zM1051,360h3v2h-3zM1057,395h6v2h-6zM1015,415h8v5h-8zM1010,406h4v4h-4zM1039,348h4v2h-4zM1023,400h4v4h-4zM1049,383h4v3h-4zM1011,406h6v3h-6zM1071,357h4v5h-4zM1067,401h4v5h-4zM1051,337h8v3h-8zM1016,410h3v4h-3zM1047,358h8v5h-8zM1029,347h3v5h-3zM1043,336h6v2h-6zM1071,362h8v5h-8zM1036,385h8v4h-8zM1031,412h3v4h-3zM1058,408h4v5h-4zM1034,413h8v5h-8zM1057,346h3v4h-3zM1054,345h6v3h-6zM1069,348h3v2h-3zM1067,404h8v4h-8zM1056,399h6v5h-6zM1010,401h4v5h-4zM1058,345h6v2h-6zM1067,347h3v4h-3zM1033,385h6v3h-6zM1054,329h6v5h-6zM1013,403h4v3h-4zM1065,397h6v4h-6zM1063,350h8v3h-8zM1024,395h4v3h-4zM1048,405h6v4h-6zM1039,366h4v5h-4zM1034,401h8v3h-8zM1021,374h6v3h-6zM1021,369h4v3h-4zM1050,387h4v2h-4zM1035,368h8v5h-8zM1044,349h4v4h-4zM1040,414h3v5h-3zM1068,359h4v2h-4zM1029,397h6v3h-6zM1065,406h8v5h-8zM1049,340h4v4h-4zM1055,396h6v3h-6zM1064,379h3v2h-3zM1043,367h4v5h-4zM1069,403h6v5h-6zM1036,352h4v3h-4zM1006,413h86v4h-86z M1040,326h28v5h-28z M1024,340h30v4h-30z"/>
<path fill="#8878ff" d="M1022,281h2v2h-1zM991,318h1v1h-2zM1049,269h2v2h-3zM1040,328h1v1h-2zM1002,294h2v2h-3zM1023,256h1v2h-2zM1033,315h1v2h-2zM1041,312h1v1h-3zM1023,308h1v1h-2zM1072,310h1v1h-1zM1067,299h1v1h-2zM1052,324h3v2h-3zM998,273h1v1h-1zM1057,330h1v1h-1zM1057,289h3v2h-2zM1036,302h1v1h-2zM1015,286h3v2h-1zM1008,309h1v2h-2zM1065,267h1v1h-1zM1039,323h1v2h-1zM1000,263h3v1h-3zM1055,271h2v1h-3zM1004,307h3v2h-1zM1029,265h3v1h-2zM1009,299h3v1h-1zM996,311h1v2h-1zM992,267h3v2h-3zM1075,294h2v1h-1zM1014,287h3v2h-3zM1027,289h3v1h-3zM1035,329h1v2h-2zM1050,278h2v1h-1zM1049,309h3v2h-2zM1067,275h2v2h-1zM1031,272h1v2h-2zM994,259h2v2h-1zM1031,276h2v2h-3zM1068,326h2v2h-2zM1004,274h3v2h-3zM1013,255h3v2h-1zM1065,309h2v1h-3zM999,325h3v1h-1zM1034,285h3v2h-3zM994,301h3v2h-2zM1011,294h2v1h-2zM1012,297h3v2h-1zM1054,311h2v2h-2zM1061,273h2v2h-1zM1000,305h1v1h-3zM1055,326h3v1h-3zM1038,280h1v2h-1zM1001,266h2v1h-2zM1069,301h2v1h-3zM1074,285h2v2h-3zM1034,310h2v2h-1zM1011,322h2v2h-2zM1038,295h1v1h-1zM1006,285h3v1h-1zM1024,320h3v2h-3zM1031,327h3v1h-1z"/>
<path fill="#8878ff" fill-opacity="0.8" d="M1000,253h6v1.5h-6z M1015,253h4v1.5h-4z M1030,254h8v1.5h-8z M1050,254h3v1.5h-3z M1100,254h5v1.5h-5z M1112,254h3v1.5h-3z M1120,254h6v1.5h-6z"/>
</svg>
</div>

<!-- STATUS -->
<div class="a" style="left:1113px;top:566px;width:1px;height:23px;background:#dcdcdc"></div>
<div class="a" style="left:1154px;top:566px;width:1px;height:23px;background:#dcdcdc"></div>
<div class="a" style="left:1118px;top:572px;width:4px;height:11px;background:#d01010"></div>
<div class="a" style="left:1122px;top:572px;width:4px;height:11px;background:#20b020"></div>
<div class="a" style="left:1126px;top:572px;width:3px;height:11px;background:#1020c0"></div>
<svg style="left:1158px;top:570px" width="16" height="16"><circle cx="6.5" cy="6.5" r="4.8" fill="#a8dcf4" stroke="#777" stroke-width="1.2"/><path d="M10,10 l3.5,3.5" stroke="#333" stroke-width="2.4" stroke-linecap="round"/></svg>

<div class="a" style="left:1203px;top:59px;width:145px;height:535px;background:#f2f2f2;border:1px solid #707070;border-right:none;border-top-width:1.5px;box-shadow:inset 1px 1px 0 #fcfcfc"></div>
<svg style="left:1214px;top:72px" width="10" height="10"><path d="M1,8 L8,8 L8,1 Z" fill="#444"/></svg>
<div class="a" style="left:1228px;top:70px;width:21px;height:13px;background:#e2e2e2"></div>
<svg style="left:1235px;top:94px" width="10" height="10"><path d="M1.5,1 L6,5 L1.5,9 Z" fill="none" stroke="#b0b0b0" stroke-width="1"/></svg>

<!-- BOTTOM STRIP -->
<div class="a" style="left:19px;top:593px;width:1327px;height:1px;background:#8a8a8a"></div>

<!-- CONFIG PANEL -->
<div id="cfg" class="a" style="left:19px;top:598px;width:798px;height:272px;background:#f3f3f1;border-right:1px solid #a0a0a0"></div>
<div class="a" style="left:19px;top:598px;width:798px;height:19px;background:#d2d2d2;border-top:1px solid #b8b8b8;border-bottom:1px solid #c2c2c2"></div>
<svg style="left:802px;top:601px" width="12" height="12"><path d="M3.5,3.6 h5 M4.3,3.6 v4 h3.4 v-4 M2.5,7.6 h7 M6,7.6 v3.6" stroke="#111" stroke-width="1.4" fill="none"/></svg>
<div class="a" style="left:19px;top:617px;width:797px;height:21px;background:linear-gradient(#fdfdfd,#f2f2f2);border-bottom:1px solid #c4c4c4"></div>
<svg style="left:19px;top:617px" width="170" height="21">
<path d="M3.5,11 L16,4.5 L16,18 Z" fill="#c4c4c4" stroke="#b0b0b0" stroke-width="0.8"/>
<path d="M51,9 h5 l-2.5,3 Z" fill="#bbb"/>
<path d="M62,4.5 L74,11 L62,18 Z" fill="#c4c4c4" stroke="#b0b0b0" stroke-width="0.8"/>
<path d="M80,9 h5 l-2.5,3 Z" fill="#bbb"/>
<rect x="89" y="3" width="1" height="16" fill="#c4c4c4"/>
<path d="M144.5,8 L148.5,11.5 L144.5,15 Z" fill="#111"/>
</svg>
<!-- nav -->
<div class="a" style="left:166px;top:638px;width:1px;height:232px;background:#8a8a8a"></div>
<div class="a" style="left:23px;top:643px;width:143px;height:36px;background:#d0d0d0"></div>
<div class="a" style="left:23px;top:643px;width:3px;height:36px;background:#a4a4a4"></div>
<!-- form -->
<div class="a" style="left:252px;top:644px;width:521px;height:21px;background:#fff;border:1px solid #c2c2ca"></div>
<svg style="left:760px;top:650px" width="60" height="20">
<path d="M2.5,3.5 L5,6 L7.5,3.5" stroke="#777" stroke-width="1" fill="none"/>
<path d="M18,0.5 L22,4 L18,7.5 Z" fill="#111"/>
</svg>
<div class="a" style="left:792px;top:645px;width:18px;height:19px;background:#dadada;border:1px solid #9a9a9a"></div>
<svg style="left:793px;top:646px" width="17" height="17"><g transform="translate(8.5,8.5)"><circle r="4.6" fill="#3a3a3a"/><g fill="#3a3a3a"><rect x="-1.4" y="-7" width="2.8" height="14"/><rect x="-1.4" y="-7" width="2.8" height="14" transform="rotate(60)"/><rect x="-1.4" y="-7" width="2.8" height="14" transform="rotate(120)"/></g><circle r="1.8" fill="#dadada"/></g></svg>
<div class="a" style="left:175px;top:677px;width:635px;height:108px;border:1px solid #d4dde4;border-radius:3px"></div>
<div class="a" style="left:178px;top:672px;width:58px;height:10px;background:#f2f2f2"></div>
<div class="a" style="left:284px;top:689px;width:503px;height:21px;background:#fff;border:1px solid #c2c2ca"></div>
<svg style="left:774px;top:694px" width="30" height="12"><path d="M2.5,3.5 L5,6 L7.5,3.5" stroke="#777" stroke-width="1" fill="none"/><path d="M17,1 L21,4.5 L17,8 Z" fill="#111"/></svg>
<div class="a" style="left:184px;top:714px;width:13px;height:12px;background:#e4e4e4;border:1px solid #cfcfcf"></div>
<div class="a" style="left:284px;top:732px;width:503px;height:21px;background:#f0f0f0;border:1px solid #dcdcdc"></div>
<svg style="left:774px;top:737px" width="30" height="12"><path d="M2.5,3.5 L5,6 L7.5,3.5" stroke="#c8c8c8" stroke-width="1" fill="none"/><path d="M17,1 L21,4.5 L17,8 Z" fill="#111"/></svg>
<div class="a" style="left:284px;top:757px;width:503px;height:21px;background:#f0f0f0;border:1px solid #dcdcdc"></div>
<svg style="left:774px;top:762px" width="30" height="12"><path d="M2.5,3.5 L5,6 L7.5,3.5" stroke="#c8c8c8" stroke-width="1" fill="none"/><path d="M17,1 L21,4.5 L17,8 Z" fill="#111"/></svg>


<!-- EXEC PANEL -->
<div id="exec" class="a" style="left:820px;top:598px;width:526px;height:272px;background:#a9a9a9"></div>
<div class="a" style="left:820px;top:598px;width:526px;height:19px;background:#d2d2d2;border-top:1px solid #b8b8b8;border-bottom:1px solid #c2c2c2"></div>
<div class="a" style="left:820px;top:617px;width:526px;height:23px;background:#f2f2f2;border-bottom:1px solid #a8a8a8"></div>
<div class="a" style="left:821px;top:619px;width:42px;height:20px;background:#fff"></div>
<div class="a" style="left:917px;top:619px;width:1px;height:20px;background:#a8a8a8"></div>
<div class="a" style="left:820px;top:641px;width:526px;height:19px;background:#fff;border-top:1px solid #c8c8c8"></div>
<div class="a" style="left:839px;top:642px;width:1px;height:18px;background:#ececec"></div>
<div class="a" style="left:920px;top:642px;width:1px;height:18px;background:#ececec"></div>
<div class="a" style="left:817px;top:598px;width:3px;height:272px;background:#e7e5d9"></div>








<!-- TEXT -->
<div class="t" style="left:9.70px;top:-4.11px;font-size:11px;color:#2a2a3c;transform:scaleX(0.918)">File</div>
<div class="t" style="left:43.10px;top:-4.11px;font-size:11px;color:#2a2a3c;transform:scaleX(0.945)">Edit</div>
<div class="t" style="left:78.40px;top:-4.11px;font-size:11px;color:#2a2a3c;transform:scaleX(0.924)">View</div>
<div class="t" style="left:118.10px;top:-4.11px;font-size:11px;color:#2a2a3c;transform:scaleX(0.955)">Project</div>
<div class="t" style="left:168.30px;top:-4.11px;font-size:11px;color:#2a2a3c;transform:scaleX(0.979)">Flowchart</div>
<div class="t" style="left:232.20px;top:-4.11px;font-size:11px;color:#2a2a3c;transform:scaleX(0.951)">Operator Views</div>
<div class="t" style="left:322.10px;top:-4.11px;font-size:11px;color:#2a2a3c;transform:scaleX(0.991)">Platform</div>
<div class="t" style="left:382.00px;top:-4.11px;font-size:11px;color:#2a2a3c;transform:scaleX(0.879)">Tools</div>
<div class="t" style="left:422.00px;top:-4.11px;font-size:11px;color:#2a2a3c;transform:scaleX(0.941)">Debug</div>
<div class="t" style="left:470.80px;top:-4.11px;font-size:11px;color:#2a2a3c;transform:scaleX(0.942)">Help</div>
<div class="t" style="left:23.00px;top:25.19px;font-size:11px;color:#a8a8a4;transform:scaleX(0.965)">Quick Start</div>
<div class="t" style="left:85.90px;top:25.19px;font-size:11px;color:#1a1a30;transform:scaleX(0.922);font-weight:bold">Flowchart</div>
<div class="t" style="left:147.00px;top:24.89px;font-size:11px;color:#a8a8a4;transform:scaleX(0.965)">Operator View Layout</div>
<div class="t" style="left:24.50px;top:42.19px;font-size:11px;color:#12122a;transform:scaleX(0.949);font-weight:bold">MainFlowchart</div>
<div class="t" style="left:483.00px;top:42.49px;font-size:11px;color:#a0a0a0;transform:scaleX(0.930)">Camera Live</div>
<div class="t" style="left:566.00px;top:42.49px;font-size:11px;color:#12122a;transform:scaleX(0.985)">Point Cloud</div>
<div class="t" style="left:118.20px;top:113.19px;font-size:11px;color:#333;transform:scaleX(0.973)">Loop</div>
<div class="t" style="left:51.50px;top:125.36px;font-size:9.5px;color:#8a2a8a;transform:scaleX(0.972)">CAM</div>
<div class="t" style="left:73.80px;top:137.49px;font-size:11px;color:#f4f4ff;transform:scaleX(0.925)">Camera</div>
<div class="t" style="left:52.00px;top:170.66px;font-size:9.5px;color:#3a9a3a;transform:scaleX(0.989)">STA</div>
<div class="t" style="left:77.90px;top:182.99px;font-size:11px;color:#222;transform:scaleX(0.907)">Status</div>
<div class="t" style="left:52.50px;top:196.86px;font-size:9.5px;color:#2a3a5a;transform:scaleX(1.102)">P</div>
<div class="t" style="left:1132.00px;top:574.19px;font-size:11px;color:#333;transform:scaleX(0.844)">F32</div>
<div class="t" style="left:1174.00px;top:574.19px;font-size:11px;color:#333;transform:scaleX(0.913)">0.5x</div>
<div class="t" style="left:1229.50px;top:72.53px;font-size:10px;color:#8a2a8a;transform:scaleX(0.833)">CAM</div>
<div class="t" style="left:1251.00px;top:71.69px;font-size:11px;color:#1a1a2a;transform:scaleX(0.868)">Camera</div>
<div class="t" style="left:1249.00px;top:93.69px;font-size:11px;color:#1a1a2a;transform:scaleX(0.904)">Output coordinates</div>
<div class="t" style="left:23.00px;top:602.49px;font-size:11px;color:#222;transform:scaleX(0.996)">Configuration</div>
<div class="t" style="left:38.40px;top:622.69px;font-size:11px;color:#8a8a8a;transform:scaleX(0.906)">Back</div>
<div class="t" style="left:115.70px;top:622.69px;font-size:11px;color:#111;transform:scaleX(0.930);font-weight:bold">Camera</div>
<div class="t" style="left:43.30px;top:656.01px;font-size:10.5px;color:#222;transform:scaleX(0.882)">GENERAL</div>
<div class="t" style="left:43.30px;top:692.21px;font-size:10.5px;color:#222;transform:scaleX(0.941)">IMAGE REMAP</div>
<div class="t" style="left:43.30px;top:720.81px;font-size:10.5px;color:#222;transform:scaleX(0.948)">✓ DEPTH MAP REMAP</div>
<div class="t" style="left:51.40px;top:737.11px;font-size:10.5px;color:#555;transform:scaleX(1.022);font-style:italic">MinValue / MaxValue</div>
<div class="t" style="left:43.30px;top:764.21px;font-size:10.5px;color:#222;transform:scaleX(0.935)">DEPTH MAP FILL GAP</div>
<div class="t" style="left:172.90px;top:649.99px;font-size:11px;color:#222;transform:scaleX(0.919)">Camera Source:</div>
<div class="t" style="left:255.90px;top:649.99px;font-size:11px;color:#222;transform:scaleX(0.933)">PhysicalCamera1</div>
<div class="t" style="left:181.00px;top:672.89px;font-size:11px;color:#222;transform:scaleX(0.970)">Calibration</div>
<div class="t" style="left:183.70px;top:693.79px;font-size:11px;color:#222;transform:scaleX(0.963)">Calibration:</div>
<div class="t" style="left:288.60px;top:693.79px;font-size:11px;color:#222;transform:scaleX(0.985)">None</div>
<div class="t" style="left:200.90px;top:716.19px;font-size:11px;color:#222;transform:scaleX(0.959)">Correct image:</div>
<div class="t" style="left:183.70px;top:738.29px;font-size:11px;color:#222;transform:scaleX(1.003)">Interpolation Mode:</div>
<div class="t" style="left:289.40px;top:738.29px;font-size:11px;color:#222;transform:scaleX(0.948)">Bilinear</div>
<div class="t" style="left:183.70px;top:763.39px;font-size:11px;color:#222;transform:scaleX(0.921)">Overscan:</div>
<div class="t" style="left:289.40px;top:763.39px;font-size:11px;color:#222;transform:scaleX(0.909)">Clear</div>
<div class="t" style="left:825.80px;top:601.99px;font-size:11px;color:#222;transform:scaleX(0.931)">Execution Messages</div>
<div class="t" style="left:826.30px;top:623.09px;font-size:11px;color:#222;transform:scaleX(0.928)">Design</div>
<div class="t" style="left:868.50px;top:623.09px;font-size:11px;color:#222;transform:scaleX(0.989)">Runtime</div>
<div class="t" style="left:923.00px;top:623.09px;font-size:11px;color:#222;transform:scaleX(0.925)">No messages</div>
<div class="t" style="left:848.00px;top:645.89px;font-size:11px;color:#222;transform:scaleX(0.911)">Time</div>
<div class="t" style="left:928.30px;top:645.89px;font-size:11px;color:#222;transform:scaleX(0.960)">Description</div>
<!-- /TEXT -->
</body></html>
